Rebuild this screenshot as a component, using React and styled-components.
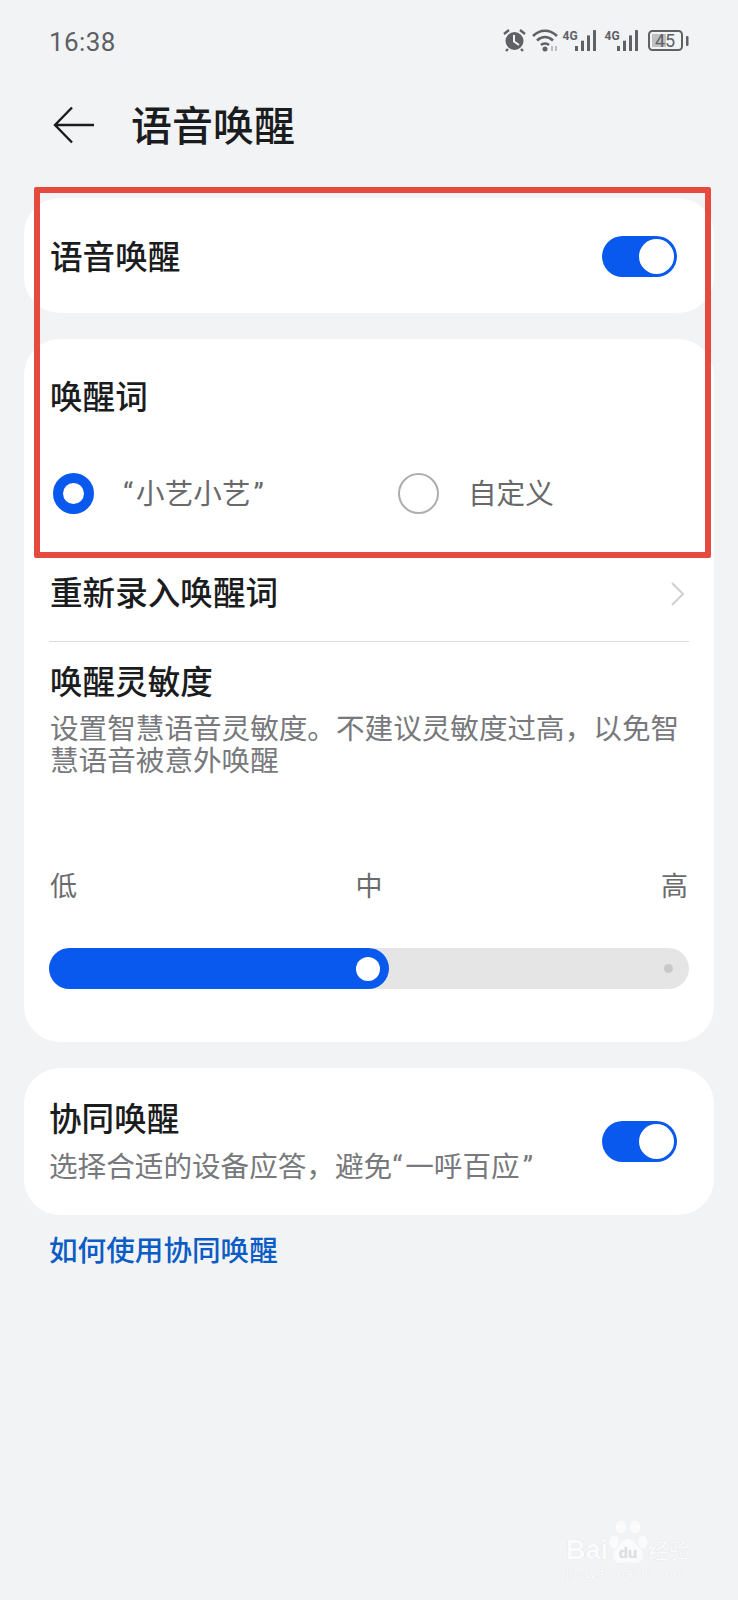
import React from "react";
import styled, { createGlobalStyle } from "styled-components";

const GlobalStyle = createGlobalStyle`
  html, body {
    margin: 0;
    padding: 0;
    background: #f2f3f5;
  }
  * {
    box-sizing: border-box;
  }
`;

const Page = styled.div`
  position: relative;
  width: 738px;
  height: 1600px;
  overflow: hidden;
  background: #f2f3f5;
  color: #1b1c1e;
  font-family: Roboto, "Noto Sans CJK SC", sans-serif;
`;

const StatusBar = styled.div`
  height: 80px;
  padding: 0 48px 0 49px;
  display: flex;
  align-items: center;
  justify-content: space-between;
`;

const Time = styled.div`
  font-size: 26px;
  color: #5c5f63;
  letter-spacing: 0.4px;
  padding-top: 3px;
`;

const Header = styled.div`
  height: 90px;
  padding-left: 53px;
  display: flex;
  align-items: center;
  gap: 37px;
`;

const Title = styled.h1`
  margin: 4px 0 0;
  font-size: 41px;
  font-weight: 500;
  line-height: 56px;
`;

const Content = styled.div`
  padding: 28px 24px 0;
  display: flex;
  flex-direction: column;
  gap: 26px;
`;

const Card = styled.section`
  background: #fff;
  border-radius: 36px;
  height: ${(p) => p.$height}px;
  padding: 0 26px;
`;

const ToggleRow = styled.div`
  height: 100%;
  padding: 2px 11px 0 0;
  display: flex;
  align-items: center;
  justify-content: space-between;
`;

const RowLabel = styled.div`
  font-size: 32.6px;
  line-height: 44px;
  font-weight: 500;
`;

const TopLabel = styled(RowLabel)`
  margin-top: 2px;
`;

const Switch = styled.div`
  width: 75px;
  height: 41px;
  border-radius: 21px;
  background: #0a59ee;
  padding: 3px;
  display: flex;
  justify-content: flex-end;
  &::after {
    content: "";
    width: 35px;
    height: 35px;
    border-radius: 50%;
    background: #fff;
  }
`;

const WakeTitle = styled(RowLabel)`
  padding-top: 37px;
`;

const RadioRow = styled.div`
  margin-top: 53px;
  height: 41px;
  display: grid;
  grid-template-columns: 345px 1fr;
  padding-left: 3px;
`;

const RadioItem = styled.div`
  display: flex;
  align-items: center;
`;

const Radio = styled.span`
  width: 41px;
  height: 41px;
  border-radius: 50%;
  flex: none;
  background: #fff;
  border: ${(p) => (p.$on ? "10.5px solid #0a59ee" : "2px solid #adadad")};
`;

const RadioLabel = styled.span`
  font-size: 28.6px;
  line-height: 40px;
  color: #68696b;
  margin-left: ${(p) => p.$gap}px;
`;

const OpenQuote = styled.span`
  margin-right: 3px;
`;

const CloseQuote = styled.span`
  margin-left: 3px;
`;

const LinkRow = styled.div`
  margin: 57px -1px 0;
  height: 71px;
  padding: 1px 4px 0 1px;
  display: flex;
  align-items: flex-start;
  justify-content: space-between;
  border-bottom: 1px solid #dcdcdc;
`;

const Chevron = styled.svg`
  width: 15px;
  height: 26px;
  margin-top: 9px;
`;

const SensitivityTitle = styled(RowLabel)`
  margin-top: 19px;
`;

const Description = styled.p`
  margin: 8px 0 0;
  font-size: 28.6px;
  line-height: 32px;
  color: #77797c;
`;

const ScaleRow = styled.div`
  margin: 91px 0 0 0;
  display: flex;
  justify-content: space-between;
  font-size: 27px;
  line-height: 38px;
  color: #6a6b6d;
`;

const Track = styled.div`
  position: relative;
  height: 41px;
  margin: 42px -1px 0;
  border-radius: 21px;
  background: #e5e5e5;
`;

const TrackFill = styled.div`
  height: 100%;
  border-radius: 21px;
  background: #0a59ee;
  display: flex;
  justify-content: flex-end;
  align-items: center;
  padding-right: 9px;
`;

const Thumb = styled.span`
  width: 24px;
  height: 24px;
  border-radius: 50%;
  background: #fff;
`;

const EndDot = styled.span`
  position: absolute;
  right: 16px;
  top: 16px;
  width: 9px;
  height: 9px;
  border-radius: 50%;
  background: #c9c9c9;
`;

const SyncRow = styled.div`
  height: 100%;
  display: flex;
  align-items: center;
  justify-content: space-between;
  padding-right: 11px;
`;

const SyncText = styled.div`
  display: flex;
  flex-direction: column;
  margin-left: -1px;
`;

const SyncDesc = styled(Description)`
  margin-top: 6px;
  line-height: 38px;
`;

const HelpLink = styled.a`
  margin: -10px 0 0 25px;
  font-size: 28.6px;
  line-height: 40px;
  font-weight: 500;
  color: #0b5cc4;
`;

const Highlight = styled.div`
  position: absolute;
  left: 34px;
  top: 187px;
  width: 677px;
  height: 371px;
  border: 6px solid #e64a3e;
  border-radius: 2px;
  pointer-events: none;
`;

const Watermark = styled.div`
  position: absolute;
  left: 566px;
  top: 1520px;
  width: 134px;
  color: #fff;
  opacity: 0.7;
  text-shadow: 0 0 1px rgba(0, 0, 0, 0.15);
  pointer-events: none;
`;

const MarkLine = styled.div`
  display: flex;
  align-items: flex-end;
  height: 46px;
  font-family: "Liberation Sans", "Noto Sans CJK SC", sans-serif;
  font-weight: 700;
  font-size: 27px;
  line-height: 32px;
`;

const MarkPaw = styled.svg`
  width: 42px;
  height: 46px;
  margin: 0 -1px;
  flex: none;
`;

const MarkCn = styled.span`
  font-size: 21px;
  font-weight: 400;
  line-height: 30px;
`;

const MarkUrl = styled.div`
  font-family: "Liberation Sans", sans-serif;
  font-size: 13.5px;
  line-height: 16px;
  letter-spacing: 0.6px;
`;

const StatusIcons = styled.svg`
  width: 190px;
  height: 30px;
`;

function StatusGlyphs() {
  const gray = "#5f6165";
  const bars = (x) =>
    [0, 1, 2, 3].map((i) => (
      <rect key={i} x={x + i * 6} y={21 - i * 5.3} width="3" height={5 + i * 5.3} fill={gray} />
    ));
  return (
    <StatusIcons viewBox="0 0 190 30">
      {/* alarm clock */}
      <circle cx="14.500" cy="16" r="9" fill={gray} />
      <path d="M14 10v6.500l5 3.500" stroke="#f2f3f5" strokeWidth="2" fill="none" />
      <path d="M4 9l5-4M25 9l-5-4M8 24l-2 2M21 24l2 2" stroke={gray} strokeWidth="2.400" fill="none" />
      {/* wifi */}
      <path d="M33 11c7-7 17-7 24 0M37 15.500c5-4.500 11-4.500 16 0M41 20c2-2 6-2 8 0" stroke={gray} strokeWidth="2.600" fill="none" />
      <circle cx="45" cy="24" r="2.500" fill={gray} />
      <path d="M52 26v-5M56 21v5" stroke="#b5b7ba" strokeWidth="1.800" />
      {/* sim 1 */}
      <text x="62.500" y="15" fontSize="12" fontWeight="700" fill={gray} fontFamily="Roboto, sans-serif">4G</text>
      {bars(75)}
      {/* sim 2 */}
      <text x="104.500" y="15" fontSize="12" fontWeight="700" fill={gray} fontFamily="Roboto, sans-serif">4G</text>
      {bars(117)}
      {/* battery */}
      <rect x="149" y="6" width="33" height="19" rx="3.500" fill="none" stroke={gray} strokeWidth="2" />
      <rect x="152" y="9" width="14" height="13" fill="#bfc0c2" />
      <text x="155" y="22" fontSize="18" fill={gray} fontFamily="Roboto, sans-serif">45</text>
      <rect x="186" y="11" width="2.500" height="10" rx="1" fill={gray} />
    </StatusIcons>
  );
}

export default function App() {
  return (
    <Page>
      <GlobalStyle />
      <StatusBar>
        <Time>16:38</Time>
        <StatusGlyphs />
      </StatusBar>
      <Header>
        <svg width="41" height="38" viewBox="0 0 41 38" fill="none" stroke="#1b1c1e" strokeWidth="2.400">
          <path d="M19 1.500 2 19l17 17.500M2 19h39" />
        </svg>
        <Title>语音唤醒</Title>
      </Header>
      <Content>
        <Card $height={115}>
          <ToggleRow>
            <TopLabel>语音唤醒</TopLabel>
            <Switch />
          </ToggleRow>
        </Card>
        <Card $height={703}>
          <WakeTitle>唤醒词</WakeTitle>
          <RadioRow>
            <RadioItem>
              <Radio $on />
              <RadioLabel $gap={29}>
                <OpenQuote>“</OpenQuote>小艺小艺<CloseQuote>”</CloseQuote>
              </RadioLabel>
            </RadioItem>
            <RadioItem>
              <Radio />
              <RadioLabel $gap={29}>自定义</RadioLabel>
            </RadioItem>
          </RadioRow>
          <LinkRow>
            <RowLabel>重新录入唤醒词</RowLabel>
            <Chevron viewBox="0 0 15 26" fill="none" stroke="#cfd0d2" strokeWidth="2">
              <path d="M2 2l11 11L2 24" />
            </Chevron>
          </LinkRow>
          <SensitivityTitle>唤醒灵敏度</SensitivityTitle>
          <Description>
            设置智慧语音灵敏度。不建议灵敏度过高，以免智
            <br />
            慧语音被意外唤醒
          </Description>
          <ScaleRow>
            <span>低</span>
            <span>中</span>
            <span>高</span>
          </ScaleRow>
          <Track>
            <TrackFill style={{ width: `${(340 / 640) * 100}%` }}>
              <Thumb />
            </TrackFill>
            <EndDot />
          </Track>
        </Card>
        <Card $height={147}>
          <SyncRow>
            <SyncText>
              <RowLabel>协同唤醒</RowLabel>
              <SyncDesc>
                选择合适的设备应答，避免<OpenQuote>“</OpenQuote>一呼百应<CloseQuote>”</CloseQuote>
              </SyncDesc>
            </SyncText>
            <Switch />
          </SyncRow>
        </Card>
        <HelpLink>如何使用协同唤醒</HelpLink>
      </Content>
      <Highlight />
      <Watermark>
        <MarkLine>
          Bai
          <MarkPaw viewBox="0 0 42 46" fill="#fff">
            <ellipse cx="7" cy="22" rx="4.500" ry="6.500" />
            <ellipse cx="14" cy="7" rx="5" ry="6.500" />
            <ellipse cx="28" cy="7" rx="5" ry="6.500" />
            <ellipse cx="36" cy="22" rx="4.500" ry="6.500" />
            <path d="M21 19c6 0 8 6 13 11 5 6 0 14-7 13-4-1-8-1-12 0-7 1-12-7-7-13 5-4 7-11 13-11z" />
            <text x="21" y="38" textAnchor="middle" fontSize="15" fontWeight="700" fill="#d5d7da" stroke="none">du</text>
          </MarkPaw>
          <MarkCn>经验</MarkCn>
        </MarkLine>
        <MarkUrl>jingyan.baidu.com</MarkUrl>
      </Watermark>
    </Page>
  );
}
